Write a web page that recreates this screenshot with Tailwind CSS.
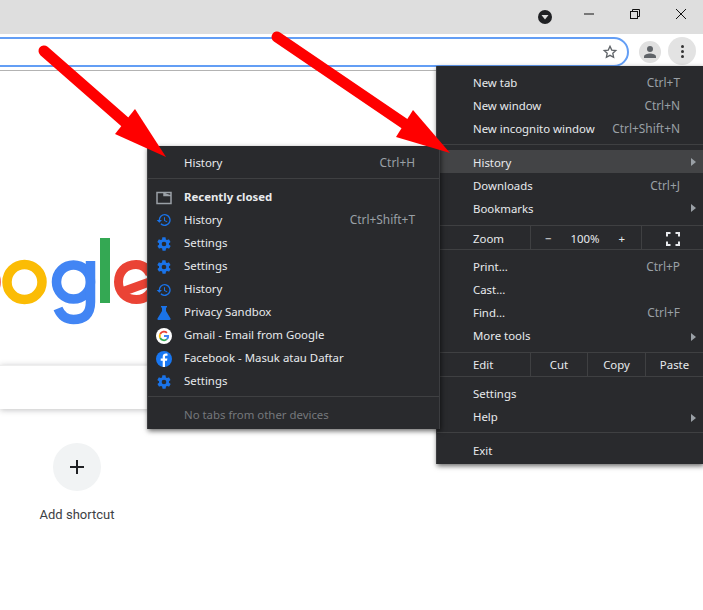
<!DOCTYPE html>
<html lang="en">
<head>
    <meta charset="UTF-8">
    <title>New Tab</title>
    <script src="https://cdn.jsdelivr.net/npm/@tailwindcss/browser@4"></script>
</head>
<body class="relative w-[703px] h-[610px] overflow-hidden bg-white font-['Noto_Sans',sans-serif]">

    <!-- Title bar -->
    <div class="h-[34px] bg-[#dedede] flex items-center justify-end">
        <svg class="w-4 h-4 mr-[30px]" viewBox="0 0 16 16"><circle cx="8" cy="8" r="7" fill="#202124"/><path d="M4.5 6h7L8 10.5z" fill="#dedede"/></svg>
        <svg class="w-3 h-3 mr-[34px] mb-[6px]" viewBox="0 0 12 12"><path d="M1 6h10" stroke="#111" fill="none"/></svg>
        <svg class="w-3 h-3 mr-[34px] mb-[6px]" viewBox="0 0 12 12" fill="none" stroke="#111"><path d="M3.5 3.500V1.500h7v7h-2"/><rect x="1.5" y="3.5" width="7" height="7"/></svg>
        <svg class="w-3 h-3 mr-4 mb-[6px]" viewBox="0 0 12 12"><path d="M1 1l10 10M11 1L1 11" stroke="#111" fill="none"/></svg>
    </div>

    <!-- Toolbar -->
    <div class="h-[37px] bg-white border-b border-[#b3b3b3] flex items-start">
        <div class="mt-[3px] ml-[-20px] w-[649px] h-[30px] border-2 border-[#639ef5] rounded-[15px] flex items-center justify-end pr-[9px]">
            <svg class="w-4 h-4" viewBox="0 0 24 24" fill="none" stroke="#5f6368" stroke-width="2"><path d="M12 3.5l2.6 5.6 6.1.7-4.5 4.2 1.2 6L12 17l-5.4 3 1.2-6-4.500-4.200 6.100-.7z"/></svg>
        </div>
        <div class="ml-[10px] mt-[7px] w-[22px] h-[22px] rounded-full bg-[#e0e0e0] flex items-center justify-center">
            <svg class="w-4 h-4" viewBox="0 0 16 16" fill="#5f6368"><circle cx="8" cy="5" r="3"/><path d="M2 14v-1.5C2 10.500 5.500 9.500 8 9.500s6 1 6 3V14z"/></svg>
        </div>
        <div class="ml-[7px] mt-[3px] w-7 h-7 rounded-full bg-[#e3e3e3] flex flex-col items-center justify-center gap-[2px]">
            <span class="w-[3px] h-[3px] rounded-full bg-[#333]"></span>
            <span class="w-[3px] h-[3px] rounded-full bg-[#333]"></span>
            <span class="w-[3px] h-[3px] rounded-full bg-[#333]"></span>
        </div>
    </div>

    <!-- New tab content -->
    <div class="pt-[164px]">
        <svg class="block w-[150px] h-[90px]" viewBox="0 0 150 90" role="img" aria-label="Google logo">
            <circle cx="-21.500" cy="47" r="17.500" fill="none" stroke="#ea4335" stroke-width="9.500"/>
            <circle cx="24.500" cy="47" r="17.500" fill="none" stroke="#fbbc05" stroke-width="9.500"/>
            <circle cx="73.500" cy="47" r="17" fill="none" stroke="#4285f4" stroke-width="9.500"/>
            <path d="M90.500 26V67c0 13-7 17.500-17 17.500-8 0-13-5-15.500-11" fill="none" stroke="#4285f4" stroke-width="9.500"/>
            <rect x="100" y="3" width="10" height="65" fill="#34a853"/>
            <path d="M119 58l33-12M150 39c-3-6-8-9.500-14-9.500-11 0-17.500 8-17.500 17.500s7 17.500 18 17.500c6 0 11-3 14-7" fill="none" stroke="#ea4335" stroke-width="9"/>
        </svg>
        <div class="mt-[40px] w-[500px] h-11 bg-white border-t border-[#eeeeee] shadow-[0_1px_6px_rgba(32,33,36,0.28)]"></div>
        <div class="mt-[34px] w-[154px] flex flex-col items-center">
            <div class="w-12 h-12 rounded-full bg-[#f1f3f4] flex items-center justify-center">
                <svg class="w-4 h-4" viewBox="0 0 16 16"><path d="M8 1v14M1 8h14" stroke="#202124" stroke-width="2"/></svg>
            </div>
            <span class="mt-[14px] text-[13px] leading-5 text-[#3c4043] font-['Roboto',sans-serif]">Add shortcut</span>
        </div>
    </div>

    <!-- Main menu -->
    <div class="absolute left-[436px] top-[66px] w-[267px] h-[398px] bg-[#292a2d] border-l border-[#3c3d40] shadow-[1px_2px_5px_rgba(0,0,0,0.6)] pt-[6px] text-[11.4px] text-[#e8eaed]">
        <div class="h-[23px] pl-9 pr-[23px] flex items-center justify-between"><span class="pb-[2px]">New tab</span><span class="pb-[2px] text-[11.9px] text-[#9aa0a6]">Ctrl+T</span></div>
        <div class="h-[23px] pl-9 pr-[23px] flex items-center justify-between"><span class="pb-[2px]">New window</span><span class="pb-[2px] text-[11.9px] text-[#9aa0a6]">Ctrl+N</span></div>
        <div class="h-[23px] pl-9 pr-[23px] flex items-center justify-between"><span class="pb-[2px]">New incognito window</span><span class="pb-[2px] text-[11.9px] text-[#9aa0a6]">Ctrl+Shift+N</span></div>
        <div class="mt-[3px] h-px bg-[#3f4042]"></div>

        <div class="mt-[5px] h-[23px] pl-9 pr-[7px] flex items-center justify-between bg-[#434446]"><span class="pt-[2px]">History</span><span class="w-0 h-0 border-y-[4px] border-y-transparent border-l-[5px] border-l-[#9aa0a6]"></span></div>
        <div class="h-[23px] pl-9 pr-[23px] flex items-center justify-between"><span class="pt-[2px]">Downloads</span><span class="pt-[2px] text-[11.9px] text-[#9aa0a6]">Ctrl+J</span></div>
        <div class="h-[23px] pl-9 pr-[7px] flex items-center justify-between"><span class="pt-[2px]">Bookmarks</span><span class="w-0 h-0 border-y-[4px] border-y-transparent border-l-[5px] border-l-[#9aa0a6]"></span></div>
        <div class="mt-[6px] h-px bg-[#3f4042]"></div>

        <div class="h-[23px] flex items-center">
            <span class="w-[93px] pl-9 pt-[2px]">Zoom</span>
            <div class="w-[112px] h-full border-x border-[#3f4042] flex items-center justify-between pl-[14px] pr-[16px] pt-[2px]"><span>−</span><span>100%</span><span>+</span></div>
            <div class="flex-1 flex justify-center pt-[2px]">
                <svg class="w-[14px] h-[14px]" viewBox="0 0 14 14" fill="none" stroke="#e8eaed" stroke-width="2"><path d="M1 4.500V1h3.500M9.500 1H13v3.500M13 9.500V13H9.500M4.500 13H1V9.500"/></svg>
            </div>
        </div>
        <div class="h-px bg-[#3f4042]"></div>

        <div class="mt-[6px] h-[23px] pl-9 pr-[23px] flex items-center justify-between"><span class="pb-[2px]">Print...</span><span class="pb-[2px] text-[11.9px] text-[#9aa0a6]">Ctrl+P</span></div>
        <div class="h-[23px] pl-9 pr-[23px] flex items-center"><span class="pb-[2px]">Cast...</span></div>
        <div class="h-[23px] pl-9 pr-[23px] flex items-center justify-between"><span class="pb-[2px]">Find...</span><span class="pb-[2px] text-[11.9px] text-[#9aa0a6]">Ctrl+F</span></div>
        <div class="h-[23px] pl-9 pr-[7px] flex items-center justify-between"><span class="pb-[2px]">More tools</span><span class="w-0 h-0 border-y-[4px] border-y-transparent border-l-[5px] border-l-[#9aa0a6]"></span></div>
        <div class="mt-[4px] h-px bg-[#3f4042]"></div>

        <div class="h-[23px] flex items-center">
            <span class="w-[93px] pl-9">Edit</span>
            <div class="w-[57px] h-full border-l border-[#3f4042] flex items-center justify-center">Cut</div>
            <div class="w-[58px] h-full border-l border-[#3f4042] flex items-center justify-center">Copy</div>
            <div class="flex-1 h-full border-l border-[#3f4042] flex items-center justify-center">Paste</div>
        </div>
        <div class="h-px bg-[#3f4042]"></div>

        <div class="mt-[6px] h-[23px] pl-9 flex items-center"><span class="pb-[2px]">Settings</span></div>
        <div class="h-[23px] pl-9 pr-[7px] flex items-center justify-between"><span class="pb-[2px]">Help</span><span class="w-0 h-0 border-y-[4px] border-y-transparent border-l-[5px] border-l-[#9aa0a6]"></span></div>
        <div class="mt-[3px] h-px bg-[#3f4042]"></div>

        <div class="mt-[7px] h-[23px] pl-9 flex items-center"><span class="pb-[2px]">Exit</span></div>
    </div>

    <!-- History submenu -->
    <div class="absolute left-[147px] top-[146px] w-[293px] h-[283px] bg-[#292a2d] border-x border-[#3c3d40] shadow-[1px_2px_5px_rgba(0,0,0,0.6)] pt-[6px] text-[11.4px] text-[#e8eaed]">
        <div class="h-[23px] pl-9 pr-6 flex items-center justify-between"><span class="pb-[2px]">History</span><span class="pb-[2px] text-[11.9px] text-[#9aa0a6]">Ctrl+H</span></div>
        <div class="mt-[3px] h-px bg-[#3f4042]"></div>
        <div class="mt-[7px] h-[23px] flex items-center font-bold">
            <svg class="w-4 h-4 ml-2 mr-3" viewBox="0 0 16 16" fill="none" stroke="#9aa0a6" stroke-width="1.500"><path d="M1 2.500h14v11H1z"/><path d="M8 2.500v3h7" fill="#9aa0a6"/></svg>
            <span class="pb-[2px]">Recently closed</span>
        </div>
        <div class="h-[23px] pr-6 flex items-center justify-between">
            <div class="flex items-center">
                <svg class="w-4 h-4 ml-2 mr-3" viewBox="0 0 24 24" fill="#1a73e8"><path d="M13 3a9 9 0 0 0-9 9H1l4 4 4-4H6a7 7 0 1 1 2.100 5l-1.400 1.400A9 9 0 1 0 13 3zm-1 5v5l4.300 2.500.7-1.200-3.500-2.100V8z"/></svg>
                <span class="pb-[2px]">History</span>
            </div>
            <span class="pb-[2px] text-[11.9px] text-[#9aa0a6]">Ctrl+Shift+T</span>
        </div>
        <div class="h-[23px] flex items-center">
            <svg class="w-4 h-4 ml-2 mr-3" viewBox="0 0 24 24" fill="#1a73e8"><path fill-rule="evenodd" d="M19.400 13c.1-.3.100-.700.100-1s0-.700-.100-1l2.100-1.600c.2-.2.200-.4.100-.6l-2-3.500c-.1-.2-.4-.3-.6-.2l-2.500 1c-.5-.4-1.100-.7-1.700-1l-.4-2.600c0-.3-.2-.5-.5-.5h-4c-.3 0-.5.200-.5.500l-.4 2.600c-.6.300-1.200.6-1.700 1l-2.500-1c-.2-.1-.5 0-.6.200l-2 3.500c-.1.200-.1.400.1.600L4.600 11c-.1.300-.1.700-.1 1s0 .7.100 1l-2.100 1.600c-.2.200-.2.400-.1.600l2 3.500c.1.200.4.300.6.200l2.500-1c.5.400 1.100.7 1.700 1l.4 2.600c0 .3.200.5.500.5h4c.3 0 .5-.2.500-.5l.4-2.600c.6-.3 1.200-.6 1.700-1l2.500 1c.2.100.5 0 .6-.2l2-3.500c.1-.2.100-.4-.1-.6zM12 15.500a3.500 3.500 0 1 1 0-7 3.500 3.500 0 0 1 0 7z"/></svg>
            <span class="pb-[2px]">Settings</span>
        </div>
        <div class="h-[23px] flex items-center">
            <svg class="w-4 h-4 ml-2 mr-3" viewBox="0 0 24 24" fill="#1a73e8"><path fill-rule="evenodd" d="M19.400 13c.1-.3.100-.700.100-1s0-.700-.100-1l2.100-1.600c.2-.2.200-.4.100-.6l-2-3.500c-.1-.2-.4-.3-.6-.2l-2.500 1c-.5-.4-1.100-.7-1.700-1l-.4-2.600c0-.3-.2-.5-.5-.5h-4c-.3 0-.5.200-.5.500l-.4 2.600c-.6.300-1.200.6-1.700 1l-2.500-1c-.2-.1-.5 0-.6.200l-2 3.500c-.1.200-.1.400.1.600L4.600 11c-.1.300-.1.700-.1 1s0 .7.100 1l-2.100 1.600c-.2.200-.2.400-.1.600l2 3.500c.1.200.4.300.6.200l2.500-1c.5.400 1.100.7 1.700 1l.4 2.600c0 .3.200.5.500.5h4c.3 0 .5-.2.500-.5l.4-2.600c.6-.3 1.200-.6 1.700-1l2.500 1c.2.100.5 0 .6-.2l2-3.500c.1-.2.100-.4-.1-.6zM12 15.500a3.500 3.500 0 1 1 0-7 3.500 3.500 0 0 1 0 7z"/></svg>
            <span class="pb-[2px]">Settings</span>
        </div>
        <div class="h-[23px] flex items-center">
            <svg class="w-4 h-4 ml-2 mr-3" viewBox="0 0 24 24" fill="#1a73e8"><path d="M13 3a9 9 0 0 0-9 9H1l4 4 4-4H6a7 7 0 1 1 2.100 5l-1.400 1.400A9 9 0 1 0 13 3zm-1 5v5l4.300 2.500.7-1.200-3.500-2.100V8z"/></svg>
            <span class="pb-[2px]">History</span>
        </div>
        <div class="h-[23px] flex items-center">
            <svg class="w-4 h-4 ml-2 mr-3" viewBox="0 0 16 16" fill="#1a73e8"><path d="M5 1h6v1.500h-1v3.500l4.500 7.500c.4.700-.1 1.500-.9 1.500H2.400c-.8 0-1.300-.8-.9-1.500L6 6V2.500H5z"/></svg>
            <span class="pb-[2px]">Privacy Sandbox</span>
        </div>
        <div class="h-[23px] flex items-center">
            <svg class="w-4 h-4 ml-2 mr-3" viewBox="0 0 16 16"><circle cx="8" cy="8" r="8" fill="#fff"/><path d="M8 4.600a3.400 3.400 0 0 1 2.300.9l1.300-1.300A5.200 5.200 0 0 0 3.400 5.600l1.500 1.200A3.300 3.300 0 0 1 8 4.600z" fill="#ea4335"/><path d="M4.900 9.200 3.400 10.400a5.200 5.200 0 0 0 8.100 1.400l-1.400-1.100A3.300 3.300 0 0 1 4.900 9.200z" fill="#34a853"/><path d="M3.400 5.600a5.200 5.200 0 0 0 0 4.800l1.500-1.200a3.300 3.300 0 0 1 0-2.400z" fill="#fbbc05"/><path d="M13.100 7H8v2h2.900a2.500 2.500 0 0 1-.8 1.700l1.400 1.100A5.300 5.300 0 0 0 13.100 7z" fill="#4285f4"/></svg>
            <span class="pb-[2px]">Gmail - Email from Google</span>
        </div>
        <div class="h-[23px] flex items-center">
            <svg class="w-4 h-4 ml-2 mr-3" viewBox="0 0 16 16"><circle cx="8" cy="8" r="8" fill="#1877f2"/><path d="M9 16V9.800h2l.4-2.300H9V6c0-.7.300-1.200 1.300-1.200h1.200v-2C11.100 2.700 10.500 2.600 9.900 2.600 8 2.600 6.700 3.800 6.700 5.800v1.700H4.700v2.300h2V16z" fill="#fff"/></svg>
            <span class="pb-[2px]">Facebook - Masuk atau Daftar</span>
        </div>
        <div class="h-[23px] flex items-center">
            <svg class="w-4 h-4 ml-2 mr-3" viewBox="0 0 24 24" fill="#1a73e8"><path fill-rule="evenodd" d="M19.400 13c.1-.3.100-.700.100-1s0-.700-.100-1l2.100-1.600c.2-.2.200-.4.100-.6l-2-3.500c-.1-.2-.4-.3-.6-.2l-2.500 1c-.5-.4-1.100-.7-1.700-1l-.4-2.600c0-.3-.2-.5-.5-.5h-4c-.3 0-.5.200-.5.500l-.4 2.600c-.6.300-1.200.6-1.700 1l-2.500-1c-.2-.1-.5 0-.6.200l-2 3.500c-.1.200-.1.400.1.600L4.600 11c-.1.300-.1.700-.1 1s0 .7.100 1l-2.100 1.600c-.2.200-.2.400-.1.600l2 3.500c.1.200.4.300.6.200l2.500-1c.5.400 1.100.7 1.700 1l.4 2.600c0 .3.200.5.500.5h4c.3 0 .5-.2.500-.5l.4-2.600c.6-.3 1.200-.6 1.700-1l2.500 1c.2.100.5 0 .6-.2l2-3.500c.1-.2.100-.4-.1-.6zM12 15.500a3.500 3.500 0 1 1 0-7 3.500 3.500 0 0 1 0 7z"/></svg>
            <span class="pb-[2px]">Settings</span>
        </div>
        <div class="mt-[3px] h-px bg-[#3f4042]"></div>
        <div class="mt-[7px] h-[23px] pl-9 flex items-center text-[#75787c]"><span class="pb-[2px]">No tabs from other devices</span></div>
    </div>

    <!-- Red arrows drawn over the screenshot -->
    <svg class="absolute inset-0 w-[703px] h-[610px] pointer-events-none" viewBox="0 0 703 610">
        <path d="M44 51 125 122" stroke="#ff0000" stroke-width="11" stroke-linecap="round" fill="none"/>
        <path d="M135 109 166 157 115 134z" fill="#ff0000"/>
        <path d="M277 37 405 124" stroke="#ff0000" stroke-width="11" stroke-linecap="round" fill="none"/>
        <path d="M413 110 450 153 396 137z" fill="#ff0000"/>
    </svg>
</body>
</html>
